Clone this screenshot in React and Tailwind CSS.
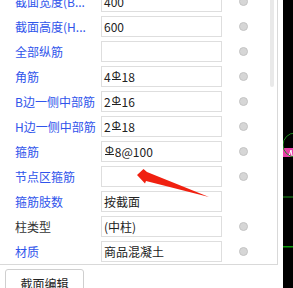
import React from 'react';

const rows = [
  { label: '截面宽度(B...', value: '400', radio: true },
  { label: '截面高度(H...', value: '600', radio: true },
  { label: '全部纵筋', value: '', radio: true },
  { label: '角筋', pre: '4', bar: '18', radio: true },
  { label: 'B边一侧中部筋', pre: '2', bar: '16', radio: true },
  { label: 'H边一侧中部筋', pre: '2', bar: '18', radio: true },
  { label: '箍筋', pre: '', bar: '8@100', radio: true },
  { label: '节点区箍筋', value: '', radio: true },
  { label: '箍筋肢数', value: '按截面', radio: false },
  { label: '柱类型', value: '(中柱)', radio: true, plain: true },
  { label: '材质', value: '商品混凝土', radio: true },
];

const Rebar = () => (
  <span className="relative -top-[2px] mx-[1px] inline-block border-b border-[#222] text-[11px] leading-[10px]">Φ</span>
);

const Row = ({ row }) => (
  <div className="flex h-[25px] shrink-0 items-center">
    <div
      className={`w-[101px] shrink-0 whitespace-nowrap pl-[15px] ${
        row.plain ? 'text-[#333]' : 'text-[#2f54eb]'
      }`}
    >
      {row.label}
    </div>
    <div className="flex h-[21px] w-[121px] shrink-0 items-center border-[1.5px] border-[#dedede] pl-[2px] text-[#222]">
      {row.bar !== undefined ? (
        <>
          {row.pre}
          <Rebar />
          {row.bar}
        </>
      ) : (
        row.value
      )}
    </div>
    <div className="flex w-[48px] justify-center pr-[6px]">
      {row.radio && (
        <span className="block h-[9px] w-[9px] rounded-full border border-[#c4c4c4] bg-[#d6d6d6]" />
      )}
    </div>
  </div>
);

export default function App() {
  return (
    <div className="relative flex h-[288px] w-[293px] overflow-hidden bg-white font-['Microsoft_YaHei','Noto_Sans_CJK_SC',sans-serif] text-[12px]">
      <div className="flex w-[278px] shrink-0 flex-col">
        <div className="flex h-[265px] shrink-0 overflow-hidden border-r border-b border-[#d9d9d9]">
          <div className="-mt-[11px] flex w-[270px] shrink-0 flex-col">
            {rows.map((r) => (
              <Row key={r.label} row={r} />
            ))}
          </div>
          <div className="w-[4px] shrink-0">
            <div className="h-[87px] rounded-b-full bg-[#e9e9e9]" />
          </div>
        </div>
        <div className="pl-[5px] pt-[4px]">
          <button className="h-[28px] w-[79px] rounded-[3px] border border-[#cfcfcf] bg-white pt-[2px] text-[12px] text-[#222]">
            截面编辑
          </button>
        </div>
      </div>
      <div className="w-[5px] shrink-0" />
      <div className="relative flex-1 bg-black">
        <svg className="absolute inset-0" width="10" height="288" viewBox="0 0 10 288">
          <rect x="0" y="148" width="10" height="9" fill="#e83fa8" />
          <path d="M6 156 L8 150 L9 156" stroke="#fff" strokeWidth="1" fill="none" />
          <circle cx="12" cy="145" r="12" stroke="#1f8a1f" strokeWidth="1" fill="none" />
          <rect x="0" y="196" width="10" height="2" fill="#0d4a0d" />
          <rect x="0" y="246" width="10" height="1.5" fill="#0a9a0a" />
        </svg>
      </div>
      <svg className="pointer-events-none absolute inset-0" width="293" height="288">
        <polygon points="137,175 143.5,169 147,172 209,197 146,181 145,183.5" fill="#f02010" />
      </svg>
    </div>
  );
}
